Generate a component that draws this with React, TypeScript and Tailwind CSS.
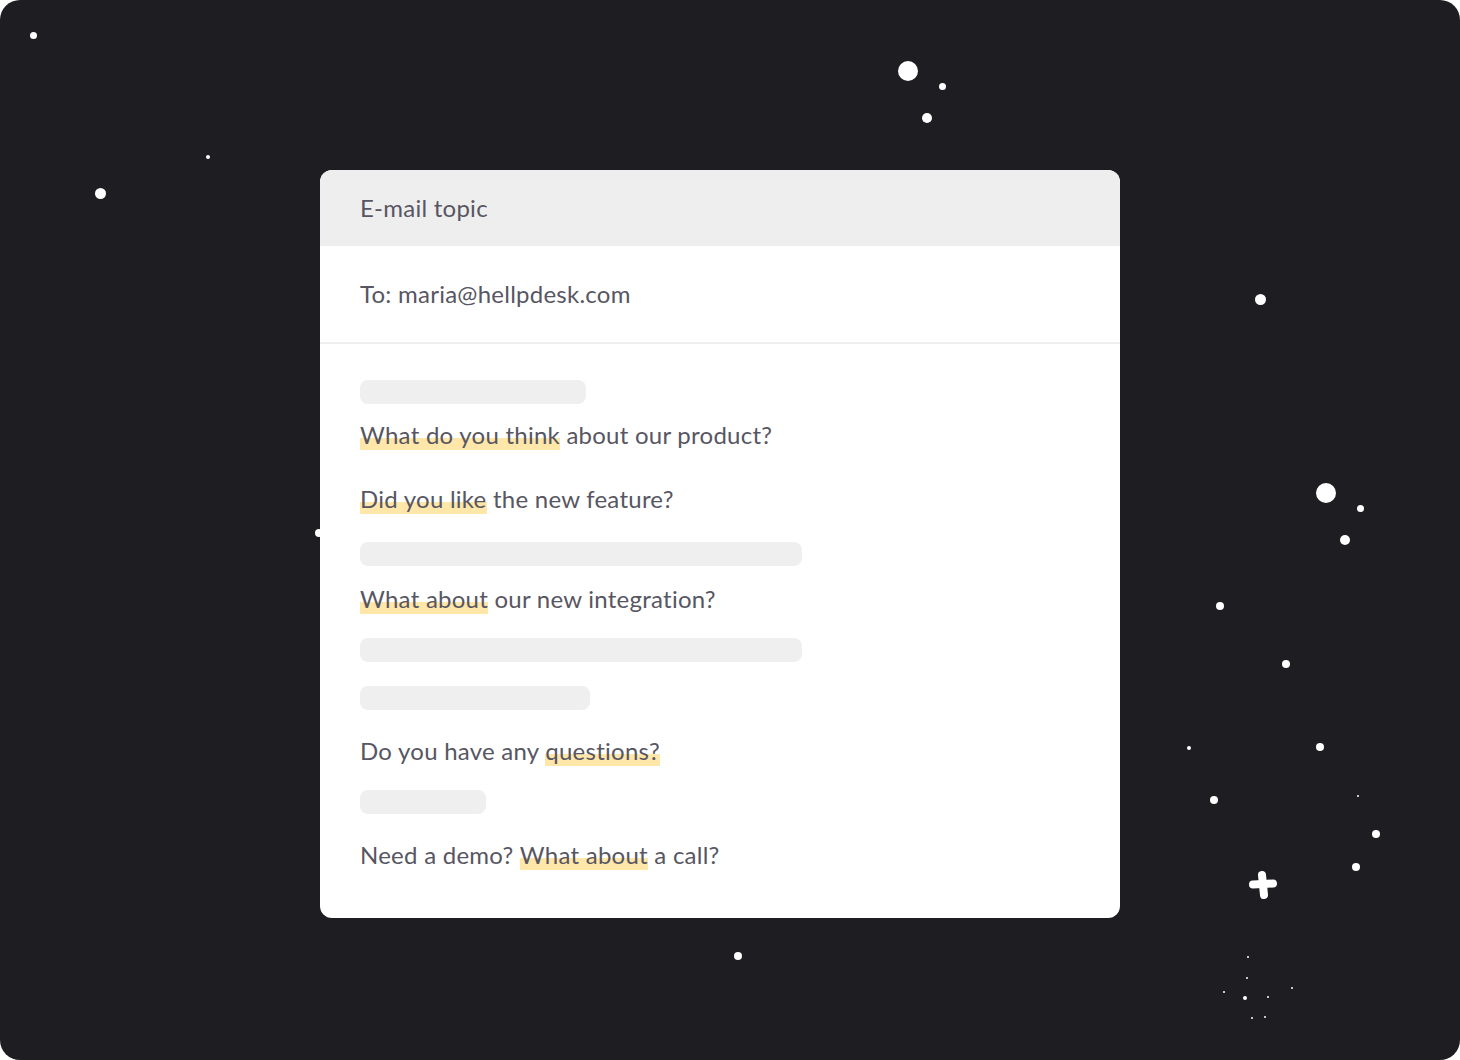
import React from "react";

const dots: Array<[number, number, number]> = [
  [33, 35, 3.5],
  [208, 157, 2],
  [100, 193, 5.5],
  [908, 71, 10],
  [942, 86, 3.5],
  [927, 118, 5],
  [1260, 299, 5.5],
  [1326, 493, 10],
  [1360, 508, 3.5],
  [1345, 540, 5],
  [1220, 606, 4],
  [1286, 664, 4],
  [1189, 748, 2],
  [1320, 747, 4],
  [1214, 800, 4],
  [1358, 796, 1],
  [1376, 834, 4],
  [1356, 867, 4],
  [738, 956, 4],
  [319, 533, 4],
  [1248, 957, 1],
  [1247, 978, 1],
  [1224, 992, 1],
  [1245, 998, 2],
  [1268, 997, 1],
  [1292, 988, 1],
  [1252, 1018, 1],
  [1265, 1017, 1],
];

function Mark({ children }: { children: React.ReactNode }) {
  return (
    <span className="inline-block bg-[linear-gradient(to_bottom,transparent_59%,#ffe6a9_59%,#ffe6a9_97%,transparent_97%)]">
      {children}
    </span>
  );
}

function Bar({ width, className }: { width: string; className: string }) {
  return <div className={`h-6 rounded-lg bg-[#efefef] ${width} ${className}`} />;
}

export default function App() {
  return (
    <div className="h-[1060px] w-[1460px] bg-white">
      <div className="relative h-full w-full overflow-hidden rounded-[20px] bg-[#1e1d22] pl-[320px] pt-[170px] font-['Lato',sans-serif]">
        {dots.map(([x, y, r], i) => (
          <div
            key={i}
            className="absolute rounded-full bg-white"
            style={{ left: x - r, top: y - r, width: r * 2, height: r * 2 }}
          />
        ))}
        <svg className="absolute left-[1247px] top-[869px]" width="32" height="32" viewBox="0 0 32 32">
          <g stroke="white" strokeWidth="8" strokeLinecap="round">
            <line x1="15" y1="6" x2="17" y2="26" />
            <line x1="6" y1="15.5" x2="26" y2="14.5" />
          </g>
        </svg>

        <div className="relative w-[800px] overflow-hidden rounded-xl bg-white text-[24px] tracking-[0.25px] text-[#575662]">
          <div className="flex h-[76px] items-center bg-[#eeeeee] px-10">E-mail topic</div>
          <div className="flex h-[98px] items-center border-b-2 border-[#eeeeee] px-10">To: maria@hellpdesk.com</div>
          <div className="px-10 pb-[47px] pt-9 leading-8">
            <Bar width="w-[226px]" className="" />
            <p className="mt-[15px]">
              <Mark>What do you think</Mark> about our product?
            </p>
            <p className="mt-8">
              <Mark>Did you like</Mark> the new feature?
            </p>
            <Bar width="w-[442px]" className="mt-[27px]" />
            <p className="mt-[17px]">
              <Mark>What about</Mark> our new integration?
            </p>
            <Bar width="w-[442px]" className="mt-[23px]" />
            <Bar width="w-[230px]" className="mt-6" />
            <p className="mt-[25px]">
              Do you have any <Mark>questions?</Mark>
            </p>
            <Bar width="w-[126px]" className="mt-[23px]" />
            <p className="mt-[25px]">
              Need a demo? <Mark>What about</Mark> a call?
            </p>
          </div>
        </div>
      </div>
    </div>
  );
}
